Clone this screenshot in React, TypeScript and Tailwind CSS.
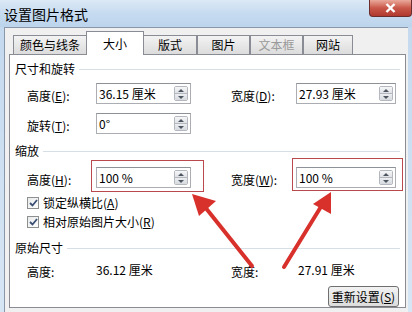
import React from 'react';

const font = '"Noto Sans CJK SC", "Noto Sans", sans-serif';

function Spin() {
  return (
    <div className="flex flex-col w-[14px] h-[15px] border border-[#b4b8be] rounded-[2px] overflow-hidden">
      <div className="flex-1 flex items-center justify-center bg-gradient-to-b from-[#f6f7f8] to-[#dfe2e6] border-b border-[#b4b8be]">
        <svg width="6" height="3" viewBox="0 0 6 3"><path d="M0 3 L3 0 L6 3 Z" fill="#4d5560" /></svg>
      </div>
      <div className="flex-1 flex items-center justify-center bg-gradient-to-b from-[#eceef1] to-[#d6dade]">
        <svg width="6" height="3" viewBox="0 0 6 3"><path d="M0 0 L3 3 L6 0 Z" fill="#4d5560" /></svg>
      </div>
    </div>
  );
}

function SpinInput({ value, w }: { value: string; w: string }) {
  return (
    <div className={`${w} h-[21px] flex items-center justify-between bg-white border border-[#abadb3] border-t-[#8d9198] pl-[2px] pr-[2px]`}>
      <span className="text-[12px] leading-none text-black">{value}</span>
      <Spin />
    </div>
  );
}

function Label({ text, k }: { text: string; k?: string }) {
  return (
    <span className="text-[12px] leading-none text-black">
      {text}
      {k && (
        <>
          (<span className="underline">{k}</span>):
        </>
      )}
    </span>
  );
}

function Heading({ text }: { text: string }) {
  return (
    <div className="flex items-center h-[16px] gap-[4px]">
      <span className="text-[12px] leading-none text-black">{text}</span>
      <div className="flex-1 h-px bg-[#d5dfe5] mr-[5px]" />
    </div>
  );
}

function Row({ l, lk, lv, r, rk, rv }: { l: string; lk?: string; lv: string; r?: string; rk?: string; rv?: string }) {
  return (
    <div className="flex items-center h-[21px]">
      <div className="w-[81px] pl-[12px] shrink-0"><Label text={l} k={lk} /></div>
      <SpinInput value={lv} w="w-[95px]" />
      {r && (
        <>
          <div className="w-[40px] shrink-0" />
          <div className="w-[65px] shrink-0"><Label text={r} k={rk} /></div>
          <SpinInput value={rv || ''} w="w-[100px]" />
        </>
      )}
    </div>
  );
}

function Check({ text, k }: { text: string; k: string }) {
  return (
    <div className="flex items-center gap-[4px] pl-[12px] h-[16px]">
      <div className="w-[12px] h-[12px] border border-[#8e8f8f] bg-gradient-to-br from-[#e8e9ea] to-[#ffffff] flex items-center justify-center">
        <svg width="9" height="8" viewBox="0 0 9 8"><path d="M1 4 L3.5 6.5 L8 1" stroke="#3b4f75" strokeWidth="1.8" fill="none" /></svg>
      </div>
      <span className="text-[12px] leading-none text-black">
        {text}(<span className="underline">{k}</span>)
      </span>
    </div>
  );
}

function Tab({ text, w, active, disabled }: { text: string; w: string; active?: boolean; disabled?: boolean }) {
  if (active) {
    return (
      <div className={`${w} h-[24px] -mb-px mx-[-1px] bg-white border border-b-0 border-[#898c95] flex items-center justify-center z-10 relative`}>
        <span className="text-[12px] leading-none text-black">{text}</span>
      </div>
    );
  }
  return (
    <div className={`${w} h-[19px] bg-gradient-to-b from-[#f3f3f3] to-[#dcdcdc] border border-b-0 border-[#898c95] flex items-center justify-center`}>
      <span className={`text-[12px] leading-none ${disabled ? 'text-[#9a9a9a]' : 'text-black'}`}>{text}</span>
    </div>
  );
}

export default function App() {
  return (
    <div className="w-[412px] h-[312px] overflow-hidden relative bg-gradient-to-b from-[#c3d8ee] to-[#d7e6f5] flex flex-col" style={{ fontFamily: font }}>
      {/* title bar */}
      <div className="h-[27px] shrink-0 flex items-start justify-between bg-gradient-to-b from-[#dce9f6] via-[#c6dbf0] to-[#bcd4ec]">
        <span className="text-[14px] leading-none text-black pl-[4px] pt-[7px]">设置图片格式</span>
        <div className="w-[43px] h-[17px] rounded-b-[4px] border border-t-0 border-[#6b2c2c] bg-gradient-to-b from-[#e9a99b] via-[#c9574a] to-[#b0382f] flex items-center justify-center">
          <svg width="11" height="10" viewBox="0 0 11 10"><path d="M1.5 1 L9.5 9 M9.5 1 L1.5 9" stroke="white" strokeWidth="2.4" /></svg>
        </div>
      </div>
      {/* body */}
      <div className="flex-1 ml-[4px] mr-[4px] bg-[#f0f0f0] border-l border-t border-[#8a97a8] flex flex-col">
        <div className="h-[26px] shrink-0 flex items-end pl-[8px] relative z-10">
          <Tab text="颜色与线条" w="w-[74px]" />
          <Tab text="大小" w="w-[58px]" active />
          <Tab text="版式" w="w-[54px]" />
          <Tab text="图片" w="w-[53px]" />
          <Tab text="文本框" w="w-[53px]" disabled />
          <Tab text="网站" w="w-[50px]" />
        </div>
        <div className="ml-[4px] mr-[2px] flex-1 bg-white border border-[#898c95] flex flex-col pl-[5px] pt-[6px]">
          <Heading text="尺寸和旋转" />
          <div className="mt-[6px]">
            <Row l="高度" lk="E" lv="36.15 厘米" r="宽度" rk="D" rv="27.93 厘米" />
          </div>
          <div className="mt-[9px]">
            <Row l="旋转" lk="T" lv="0°" />
          </div>
          <div className="mt-[9px]"><Heading text="缩放" /></div>
          <div className="mt-[8px]">
            <Row l="高度" lk="H" lv="100 %" r="宽度" rk="W" rv="100 %" />
          </div>
          <div className="mt-[7px] flex flex-col gap-[3px]">
            <Check text="锁定纵横比" k="A" />
            <Check text="相对原始图片大小" k="R" />
          </div>
          <div className="mt-[10px]"><Heading text="原始尺寸" /></div>
          <div className="mt-[7px] flex items-center h-[14px]">
            <div className="w-[81px] pl-[12px] shrink-0"><Label text="高度:" /></div>
            <span className="w-[135px] shrink-0 text-[12px] leading-none text-black">36.12 厘米</span>
            <div className="w-[67px] shrink-0"><Label text="宽度:" /></div>
            <span className="text-[12px] leading-none text-black">27.91 厘米</span>
          </div>
          <div className="mt-[9px] flex justify-end pr-[6px]">
            <div className="w-[71px] h-[21px] border border-[#707070] rounded-[3px] bg-gradient-to-b from-[#f2f2f2] to-[#dddddd] flex items-center justify-center">
              <span className="text-[12px] leading-none text-black">重新设置(<span className="underline">S</span>)</span>
            </div>
          </div>
        </div>
        <div className="h-[4px] shrink-0" />
      </div>

      {/* annotation boxes */}
      <div className="absolute left-[91px] top-[160px] w-[113px] h-[32px] border border-[#b9494c]" />
      <div className="absolute left-[292px] top-[158px] w-[111px] h-[33px] border border-[#b9494c]" />
      {/* arrows */}
      <svg className="absolute left-0 top-0" width="412" height="312" viewBox="0 0 412 312">
        <path d="M252 266 L205 207" stroke="#d8312c" strokeWidth="4" strokeLinecap="round" />
        <path d="M192 194 L216 201 L199 216 Z" fill="#d8312c" />
        <path d="M284 267 L322 205" stroke="#d8312c" strokeWidth="4" strokeLinecap="round" />
        <path d="M331 192 L331 214 L313 204 Z" fill="#d8312c" />
      </svg>
    </div>
  );
}
